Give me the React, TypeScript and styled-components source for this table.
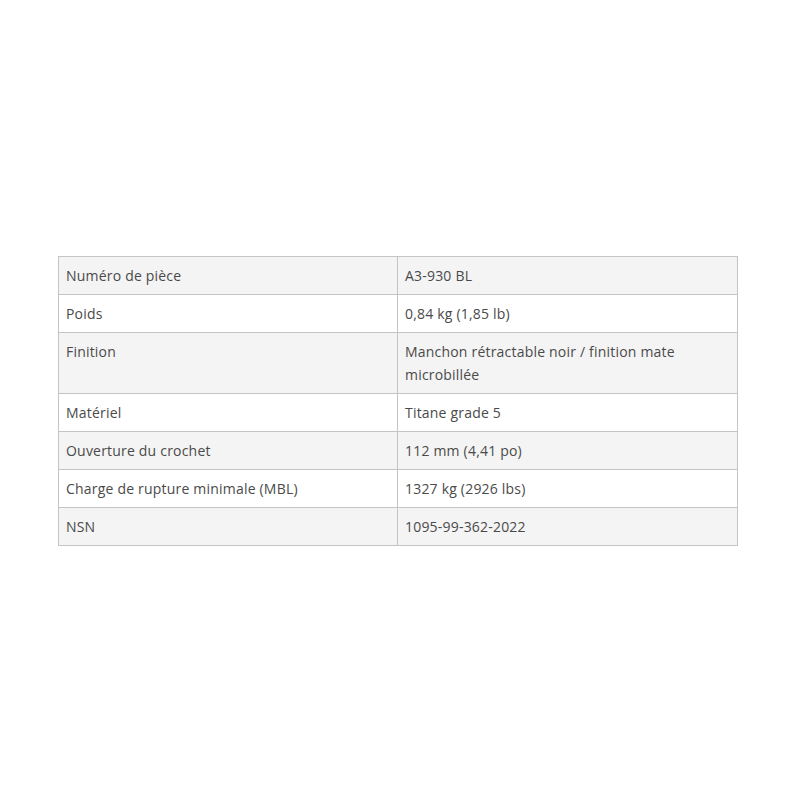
import styled, { createGlobalStyle } from "styled-components";

const GlobalStyle = createGlobalStyle`
    body {
        margin: 0;
        background: #fff;
        font-family: "Open Sans", "Noto Sans", sans-serif;
    }
`

const Page = styled.main`
    box-sizing: border-box;
    padding: 256px 62px 0 58px;
`

const SpecTable = styled.table`
    width: 100%;
    border-collapse: collapse;
    table-layout: fixed;
    font-size: 14px;
    line-height: 23px;
    letter-spacing: 0.2px;
    color: #4a4a4a;
`

const Row = styled.tr`
    background: #f4f4f4;
    &:nth-child(even) {
        background: #fff;
    }
`

const Cell = styled.td<{ $label?: boolean }>`
    border: 1px solid #c4c4c4;
    padding: 7px 7px 7px 7px;
    vertical-align: top;
    width: ${p => p.$label ? "324px" : "auto"};
`

const specs: [string, string][] = [
    ["Numéro de pièce", "A3-930 BL"],
    ["Poids", "0,84 kg (1,85 lb)"],
    ["Finition", "Manchon rétractable noir / finition mate microbillée"],
    ["Matériel", "Titane grade 5"],
    ["Ouverture du crochet", "112 mm (4,41 po)"],
    ["Charge de rupture minimale (MBL)", "1327 kg (2926 lbs)"],
    ["NSN", "1095-99-362-2022"],
]

export default function App() {
    return <Page>
        <GlobalStyle />
        <SpecTable>
            <tbody>
                {specs.map(([label, value]) => <Row key={label}>
                    <Cell $label>{label}</Cell>
                    <Cell>{value}</Cell>
                </Row>)}
            </tbody>
        </SpecTable>
    </Page>
}
